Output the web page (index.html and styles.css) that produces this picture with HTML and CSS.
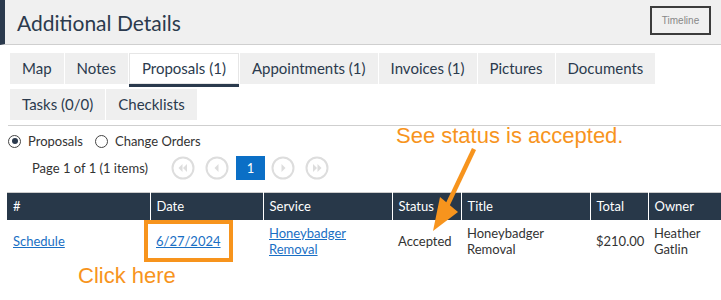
FILE: index.html
```html
<!DOCTYPE html>
<html lang="en">

<head>
    <meta charset="UTF-8">
    <title>Additional Details</title>
    <link rel="stylesheet" href="styles.css">
</head>

<body>
    <div id="page">
        <div class="panel-header">
            <h2>Additional Details</h2>
            <button class="timeline-btn">Timeline</button>
        </div>

        <div class="tabs">
            <div class="tab-row">
                <div class="tab">Map</div>
                <div class="tab">Notes</div>
                <div class="tab active">Proposals (1)</div>
                <div class="tab">Appointments (1)</div>
                <div class="tab">Invoices (1)</div>
                <div class="tab">Pictures</div>
                <div class="tab">Documents</div>
            </div>
            <div class="tab-row">
                <div class="tab">Tasks (0/0)</div>
                <div class="tab">Checklists</div>
            </div>
        </div>

        <div class="tab-body">
            <div class="radios">
                <label class="radio checked"><span class="dot"></span>Proposals</label>
                <label class="radio"><span class="dot"></span>Change Orders</label>
            </div>

            <div class="pager">
                <span class="pager-info">Page 1 of 1 (1 items)</span>
                <span class="pager-btn">
                    <svg width="24" height="24" viewBox="0 0 24 24"><circle cx="12" cy="12" r="10.5" fill="none" stroke="#ddd" stroke-width="2"/><path d="M11.5 8 L7.5 12 L11.5 16 Z M16 8 L12 12 L16 16 Z" fill="#ddd"/></svg>
                </span>
                <span class="pager-btn">
                    <svg width="24" height="24" viewBox="0 0 24 24"><circle cx="12" cy="12" r="10.5" fill="none" stroke="#ddd" stroke-width="2"/><path d="M13.5 8 L9.5 12 L13.5 16 Z" fill="#ddd"/></svg>
                </span>
                <span class="pager-num">1</span>
                <span class="pager-btn">
                    <svg width="24" height="24" viewBox="0 0 24 24"><circle cx="12" cy="12" r="10.5" fill="none" stroke="#ddd" stroke-width="2"/><path d="M10.5 8 L14.5 12 L10.5 16 Z" fill="#ddd"/></svg>
                </span>
                <span class="pager-btn">
                    <svg width="24" height="24" viewBox="0 0 24 24"><circle cx="12" cy="12" r="10.5" fill="none" stroke="#ddd" stroke-width="2"/><path d="M8 8 L12 12 L8 16 Z M12.5 8 L16.5 12 L12.5 16 Z" fill="#ddd"/></svg>
                </span>
            </div>

            <table class="grid">
                <thead>
                    <tr>
                        <th class="c-num">#</th>
                        <th class="c-date">Date</th>
                        <th class="c-service">Service</th>
                        <th class="c-status">Status</th>
                        <th class="c-title">Title</th>
                        <th class="c-total">Total</th>
                        <th class="c-owner">Owner</th>
                    </tr>
                </thead>
                <tbody>
                    <tr>
                        <td><a href="#">Schedule</a></td>
                        <td><a href="#">6/27/2024</a></td>
                        <td><a href="#">Honeybadger Removal</a></td>
                        <td>Accepted</td>
                        <td>Honeybadger Removal</td>
                        <td>$210.00</td>
                        <td>Heather Gatlin</td>
                    </tr>
                </tbody>
            </table>
        </div>

        <!-- annotations drawn on top of the screenshot -->
        <div class="note note-status">See status is accepted.</div>
        <div class="note note-click">Click here</div>
        <div class="highlight-box"></div>
        <svg class="arrow" width="721" height="300" viewBox="0 0 721 300">
            <line x1="474" y1="149" x2="447" y2="206" stroke="#f7941d" stroke-width="4.5"/>
            <polygon points="440,197 458,212 433,231" fill="#f7941d"/>
        </svg>
    </div>
</body>

</html>
```

FILE: styles.css
```css
body {
    margin: 0;
    font-family: 'Lato', 'Noto Sans', sans-serif;
    color: #333;
    background: #fff;
    overflow: hidden;
}

#page {
    position: relative;
    width: 721px;
    height: 300px;
    overflow: hidden;
}

.panel-header {
    display: flex;
    align-items: center;
    justify-content: space-between;
    height: 44px;
    background: #f0f0f0;
    border-left: 5px solid #2b3a4d;
    border-bottom: 1px solid #cfcfcf;
    padding: 0 10px 0 12px;
}

.panel-header h2 {
    margin: 0;
    font-size: 21px;
    font-weight: normal;
    color: #2b3a4d;
}

.timeline-btn {
    width: 61px;
    height: 29px;
    margin-top: -4px;
    padding: 0;
    border: 2px solid #3c3c3c;
    background: #f0f0f0;
    color: #888;
    font-family: 'Liberation Sans', sans-serif;
    font-size: 10px;
}

.tabs {
    display: flex;
    flex-direction: column;
    gap: 5px;
    margin: 8px 0 0 10px;
}

.tab-row {
    display: flex;
    gap: 1px;
}

.tab {
    height: 31px;
    line-height: 31px;
    padding: 0 12px;
    background: #efefef;
    color: #2b3a4d;
    font-size: 15px;
    box-sizing: border-box;
}

.tab.active {
    background: #fff;
    border: 1px solid #e6e6e6;
    line-height: 29px;
    box-shadow: 0 3px 0 #2b3a4d;
}

.tab-body {
    margin: 5px 0 0 8px;
    border-top: 1px solid #cfcfcf;
    padding-top: 6px;
}

.radios {
    display: flex;
    gap: 12px;
    height: 18px;
    align-items: center;
    font-size: 13px;
}

.radio {
    display: flex;
    align-items: center;
    gap: 7px;
}

.radio .dot {
    width: 11px;
    height: 11px;
    border: 1.5px solid #444;
    border-radius: 50%;
    position: relative;
}

.radio.checked .dot::after {
    content: '';
    position: absolute;
    left: 2.5px;
    top: 2.5px;
    width: 6px;
    height: 6px;
    border-radius: 50%;
    background: #2b3a4d;
}

.pager {
    display: flex;
    align-items: center;
    margin: 6px 0 0 24px;
    height: 24px;
    font-size: 13px;
}

.pager-info {
    margin-right: 23px;
}

.pager-btn {
    display: flex;
    margin-right: 10px;
}

.pager-num {
    width: 29px;
    height: 24px;
    line-height: 24px;
    margin: 0 6px 0 -3px;
    text-align: center;
    background: #0b6fc6;
    color: #fff;
    font-size: 13px;
}

.grid {
    margin: 12px 0 0 -1px;
    border-collapse: collapse;
    table-layout: fixed;
    width: 723px;
    font-size: 13px;
    border-top: 1px solid #ccc;
}

.grid th {
    box-sizing: border-box;
    background: #283849;
    color: #fff;
    font-weight: normal;
    text-align: left;
    height: 27px;
    padding: 0 6px;
    border-right: 1px solid #fff;
}

.grid td {
    padding: 5px 6px 4px;
    line-height: 16px;
    vertical-align: middle;
}

.grid a {
    color: #1a6fc4;
}

.c-num { width: 143px; }
.c-date { width: 113px; }
.c-service { width: 129px; }
.c-status { width: 69px; }
.c-title { width: 129px; }
.c-total { width: 58px; }
.c-owner { width: 82px; }

.note {
    position: absolute;
    font-family: 'Liberation Sans', Arial, sans-serif;
    font-size: 22px;
    color: #f7941d;
    line-height: 24px;
}

.note-status {
    left: 396px;
    top: 124px;
}

.note-click {
    left: 78px;
    top: 264px;
}

.highlight-box {
    position: absolute;
    left: 144px;
    top: 220px;
    width: 89px;
    height: 42px;
    border: 4px solid #f7941d;
    box-sizing: border-box;
}

.arrow {
    position: absolute;
    left: 0;
    top: 0;
    pointer-events: none;
}
```
